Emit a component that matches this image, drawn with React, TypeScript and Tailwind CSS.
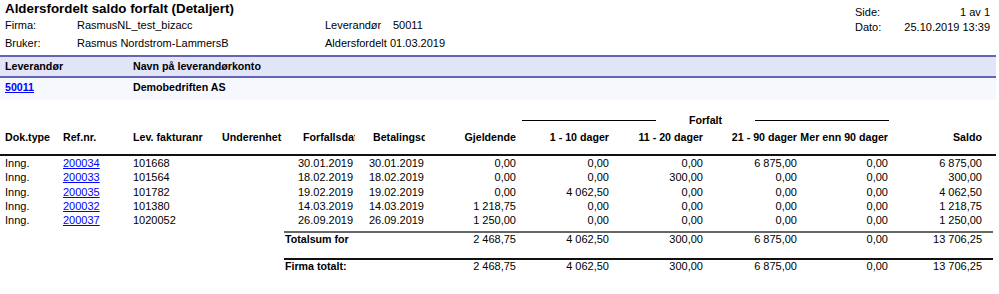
const rows = [
  { type: "Inng.", ref: "200034", lev: "101668", due: "30.01.2019", pay: "30.01.2019", vals: ["0,00", "0,00", "0,00", "6 875,00", "0,00", "6 875,00"] },
  { type: "Inng.", ref: "200033", lev: "101564", due: "18.02.2019", pay: "18.02.2019", vals: ["0,00", "0,00", "300,00", "0,00", "0,00", "300,00"] },
  { type: "Inng.", ref: "200035", lev: "101782", due: "19.02.2019", pay: "19.02.2019", vals: ["0,00", "4 062,50", "0,00", "0,00", "0,00", "4 062,50"] },
  { type: "Inng.", ref: "200032", lev: "101380", due: "14.03.2019", pay: "14.03.2019", vals: ["1 218,75", "0,00", "0,00", "0,00", "0,00", "1 218,75"] },
  { type: "Inng.", ref: "200037", lev: "1020052", due: "26.09.2019", pay: "26.09.2019", vals: ["1 250,00", "0,00", "0,00", "0,00", "0,00", "1 250,00"] },
];

const totals = ["2 468,75", "4 062,50", "300,00", "6 875,00", "0,00", "13 706,25"];

const grid = "grid grid-cols-[58px_70px_89px_81px_58px_71px_92px_93px_94px_94px_91px_94px]";

function TotalRow({ label, line }: { label: string; line: string }) {
  return (
    <div className={`ml-[284px] w-[709px] border-t-2 ${line} flex leading-[12px]`}>
      <div className="w-[143px] pl-[1px] font-bold text-[10.67px]">{label}</div>
      <div className="grid grid-cols-[92px_93px_94px_94px_91px_94px]">
        {totals.map((v, i) => (
          <div key={i} className="text-right pr-[3px]">{v}</div>
        ))}
      </div>
    </div>
  );
}

export default function App() {
  return (
    <div className="w-[999px] h-[294px] overflow-hidden bg-white text-black text-[11px] font-['Liberation_Sans',Arial,sans-serif]">

      {/* Report header */}
      <div className="h-[55px] flex">
        <div className="w-[855px]">
          <div className="pl-[5px] pt-[1px] leading-[16px] text-[13.33px] font-bold">Aldersfordelt saldo forfalt (Detaljert)</div>
          <div className="-mt-[1px] pl-[5px] grid grid-cols-[72px_248px_65px_1fr] leading-[18px]">
            <div>Firma:</div>
            <div>RasmusNL_test_bizacc</div>
            <div>Leverandør</div>
            <div className="pl-[3px]">50011</div>
            <div>Bruker:</div>
            <div>Rasmus Nordstrom-LammersB</div>
            <div className="whitespace-nowrap">Aldersfordelt</div>
            <div>01.03.2019</div>
          </div>
        </div>
        <div className="w-[135px] pt-[5px] leading-[15px]">
          <div className="flex justify-between"><span>Side:</span><span>1 av 1</span></div>
          <div className="flex justify-between"><span>Dato:</span><span>25.10.2019 13:39</span></div>
        </div>
      </div>

      {/* Supplier band */}
      <div className="w-[996px] border-t-2 border-b-2 border-[#6565b6] bg-[#e2e4f7] flex font-bold text-[10.67px] leading-[19px]">
        <div className="w-[133px] pl-[5px]">Leverandør</div>
        <div>Navn på leverandørkonto</div>
      </div>
      <div className="w-[996px] h-[22px] bg-[#f7f8fd] flex font-bold text-[10.67px] leading-[19px]">
        <div className="w-[133px] pl-[5px]"><a className="text-[#0000ff] underline">50011</a></div>
        <div>Demobedriften AS</div>
      </div>

      {/* Forfalt group header */}
      <div className="mt-[13px] h-[15px] ml-[522px] flex items-center font-bold text-[10.67px] leading-[15px]">
        <div className="w-[134px] h-px bg-black"></div>
        <div className="w-[99px] text-center">Forfalt</div>
        <div className="w-[134px] h-px bg-black"></div>
      </div>

      {/* Column headers */}
      <div className="w-[996px] h-[28px] border-b-2 border-[#111] font-bold text-[10.67px] leading-[14px]">
        <div className={`${grid} pt-[1.5px]`}>
          <div className="pl-[5px]">Dok.type</div>
          <div className="pl-[5px]">Ref.nr.</div>
          <div className="pl-[5px]">Lev. fakturanr</div>
          <div className="pl-[5px]">Underenhet</div>
          <div className="pl-[5px] pr-[1px]"><div className="overflow-hidden whitespace-nowrap">Forfallsdato</div></div>
          <div className="pl-[17px] pr-[2px]"><div className="overflow-hidden whitespace-nowrap">Betalingsdato</div></div>
          <div className="text-right pr-[3px]">Gjeldende</div>
          <div className="text-right pr-[3px]">1 - 10 dager</div>
          <div className="text-right pr-[3px]">11 - 20 dager</div>
          <div className="text-right pr-[3px] whitespace-nowrap">21 - 90 dager</div>
          <div className="text-right pr-[3px] whitespace-nowrap">Mer enn 90 dager</div>
          <div className="text-right pr-[3px]">Saldo</div>
        </div>
      </div>

      {/* Rows */}
      <div className="leading-[14.25px]">
        {rows.map((r) => (
          <div key={r.ref} className={grid}>
            <div className="pl-[5px]">{r.type}</div>
            <div className="pl-[5px]"><a className="text-[#0000ff] underline">{r.ref}</a></div>
            <div className="pl-[5px]">{r.lev}</div>
            <div></div>
            <div className="text-right pr-[3px]">{r.due}</div>
            <div className="text-right pr-[3px]">{r.pay}</div>
            {r.vals.map((v, i) => (
              <div key={i} className="text-right pr-[3px]">{v}</div>
            ))}
          </div>
        ))}
      </div>

      {/* Totals */}
      <div className="mt-[4px]">
        <TotalRow label="Totalsum for" line="border-[#666]" />
      </div>
      <div className="mt-[13px]">
        <TotalRow label="Firma totalt:" line="border-[#111]" />
      </div>
    </div>
  );
}
